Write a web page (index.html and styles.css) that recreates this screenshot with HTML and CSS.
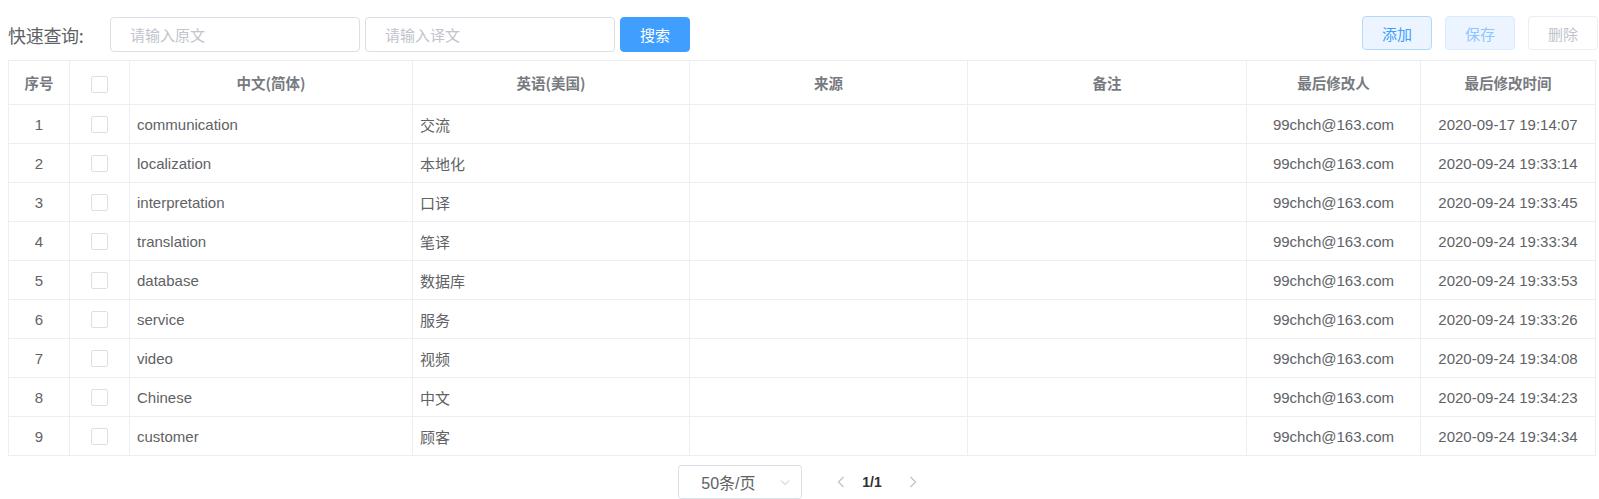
FILE: index.html
```html
<!DOCTYPE html>
<html lang="zh-CN">
<head>
<meta charset="utf-8">
<title>术语库</title>
<link rel="stylesheet" href="styles.css">
</head>
<body>
<div class="page">
  <div class="toolbar">
    <div class="search">
      <span class="label">快速查询:</span>
      <input class="input" type="text" placeholder="请输入原文">
      <input class="input second" type="text" placeholder="请输入译文">
      <button class="btn btn-primary">搜索</button>
    </div>
    <div class="actions">
      <button class="btn btn-plain">添加</button>
      <button class="btn btn-plain-disabled">保存</button>
      <button class="btn btn-disabled">删除</button>
    </div>
  </div>

  <table class="grid">
    <colgroup>
      <col class="c-no"><col class="c-chk"><col class="c-zh"><col class="c-en"><col class="c-src"><col class="c-note"><col class="c-user"><col class="c-time">
    </colgroup>
    <thead>
      <tr>
        <th>序号</th>
        <th><span class="checkbox"></span></th>
        <th>中文(简体)</th>
        <th>英语(美国)</th>
        <th>来源</th>
        <th>备注</th>
        <th>最后修改人</th>
        <th>最后修改时间</th>
      </tr>
    </thead>
    <tbody>
      <tr><td class="center">1</td><td class="center"><span class="checkbox"></span></td><td>communication</td><td>交流</td><td></td><td></td><td class="center">99chch@163.com</td><td class="center">2020-09-17 19:14:07</td></tr>
      <tr><td class="center">2</td><td class="center"><span class="checkbox"></span></td><td>localization</td><td>本地化</td><td></td><td></td><td class="center">99chch@163.com</td><td class="center">2020-09-24 19:33:14</td></tr>
      <tr><td class="center">3</td><td class="center"><span class="checkbox"></span></td><td>interpretation</td><td>口译</td><td></td><td></td><td class="center">99chch@163.com</td><td class="center">2020-09-24 19:33:45</td></tr>
      <tr><td class="center">4</td><td class="center"><span class="checkbox"></span></td><td>translation</td><td>笔译</td><td></td><td></td><td class="center">99chch@163.com</td><td class="center">2020-09-24 19:33:34</td></tr>
      <tr><td class="center">5</td><td class="center"><span class="checkbox"></span></td><td>database</td><td>数据库</td><td></td><td></td><td class="center">99chch@163.com</td><td class="center">2020-09-24 19:33:53</td></tr>
      <tr><td class="center">6</td><td class="center"><span class="checkbox"></span></td><td>service</td><td>服务</td><td></td><td></td><td class="center">99chch@163.com</td><td class="center">2020-09-24 19:33:26</td></tr>
      <tr><td class="center">7</td><td class="center"><span class="checkbox"></span></td><td>video</td><td>视频</td><td></td><td></td><td class="center">99chch@163.com</td><td class="center">2020-09-24 19:34:08</td></tr>
      <tr><td class="center">8</td><td class="center"><span class="checkbox"></span></td><td>Chinese</td><td>中文</td><td></td><td></td><td class="center">99chch@163.com</td><td class="center">2020-09-24 19:34:23</td></tr>
      <tr><td class="center">9</td><td class="center"><span class="checkbox"></span></td><td>customer</td><td>顾客</td><td></td><td></td><td class="center">99chch@163.com</td><td class="center">2020-09-24 19:34:34</td></tr>
    </tbody>
  </table>

  <div class="pager">
    <div class="select">
      <span>50条/页</span>
      <svg class="arrow" width="12" height="12" viewBox="0 0 12 12"><path d="M2 4.5 L6 8.5 L10 4.5" fill="none" stroke="#c0c4cc" stroke-width="1"/></svg>
    </div>
    <span class="nav">
      <svg width="10" height="14" viewBox="0 0 10 14"><path d="M7.5 2 L2.5 7 L7.5 12" fill="none" stroke="#c0c4cc" stroke-width="1.3"/></svg>
    </span>
    <span class="count">1/1</span>
    <span class="nav">
      <svg width="10" height="14" viewBox="0 0 10 14"><path d="M2.5 2 L7.5 7 L2.5 12" fill="none" stroke="#c0c4cc" stroke-width="1.3"/></svg>
    </span>
  </div>
</div>
</body>
</html>
```

FILE: styles.css
```css
* { box-sizing: border-box; }

html, body {
  margin: 0;
  padding: 0;
  background: #ffffff;
}

body {
  font-family: "Liberation Sans", Arial, "Noto Sans CJK SC", sans-serif;
  font-size: 15px;
  color: #606266;
}

.page {
  padding: 16px 1px 0 8px;
}

.toolbar {
  display: flex;
  justify-content: space-between;
  align-items: flex-start;
  height: 44px;
}

.search {
  display: flex;
  align-items: center;
  margin-top: 1px;
}

.label {
  font-family: "Noto Sans CJK SC", sans-serif;
  font-size: 18px;
  color: #606266;
  width: 102px;
  letter-spacing: -0.3px;
}

.input {
  width: 250px;
  height: 35px;
  border: 1px solid #dcdfe6;
  border-radius: 4px;
  padding: 0 19px;
  font-family: "Noto Sans CJK SC", sans-serif;
  font-size: 15px;
  color: #606266;
  outline: none;
  background: #fff;
}

.input::placeholder { color: #c0c4cc; }

.input.second { margin-left: 5px; }

.btn {
  width: 70px;
  height: 35px;
  border-radius: 4px;
  font-family: "Noto Sans CJK SC", sans-serif;
  font-size: 15px;
  padding: 0;
  cursor: pointer;
}

.btn-primary {
  margin-left: 5px;
  background: #409eff;
  border: 1px solid #409eff;
  color: #ffffff;
}

.actions {
  display: flex;
  gap: 13px;
}

.actions .btn { height: 34px; }

.btn-plain {
  background: #ecf5ff;
  border: 1px solid #b3d8ff;
  color: #409eff;
}

.btn-plain-disabled {
  background: #ecf5ff;
  border: 1px solid #d9ecff;
  color: #8cc5ff;
}

.btn-disabled {
  background: #ffffff;
  border: 1px solid #ebeef5;
  color: #c0c4cc;
}

.grid {
  width: 1587px;
  border-collapse: collapse;
  table-layout: fixed;
  border: 1px solid #ebeef5;
}

.c-no { width: 61px; }
.c-chk { width: 60px; }
.c-zh { width: 283px; }
.c-en { width: 277px; }
.c-src { width: 278px; }
.c-note { width: 279px; }
.c-user { width: 174px; }
.c-time { width: 175px; }

.grid th,
.grid td {
  border: 1px solid #ebeef5;
  padding: 0 7px;
  white-space: nowrap;
  overflow: hidden;
}

.grid th {
  height: 44px;
  font-family: "Noto Sans CJK SC", sans-serif;
  font-weight: 700;
  font-size: 14.5px;
  color: #777a80;
  text-align: center;
}

.grid td {
  height: 39px;
  font-family: "Liberation Sans", "Noto Sans CJK SC", sans-serif;
  font-size: 15px;
  color: #606266;
  text-align: left;
}

.grid td.center { text-align: center; }

.checkbox {
  display: inline-block;
  width: 17px;
  height: 17px;
  border: 1px solid #dcdfe6;
  border-radius: 2px;
  background: #fff;
  vertical-align: middle;
}

.pager {
  display: flex;
  align-items: center;
  justify-content: center;
  margin-top: 9px;
  padding-right: 8px;
}

.select {
  width: 124px;
  height: 34px;
  border: 1px solid #dcdfe6;
  border-radius: 3px;
  display: flex;
  align-items: center;
  justify-content: space-between;
  padding: 0 10px 0 22px;
  font-family: "Liberation Sans", "Noto Sans CJK SC", sans-serif;
  font-size: 16px;
  color: #606266;
}

.nav {
  display: flex;
  align-items: center;
  width: 14px;
  justify-content: center;
}

.select + .nav { margin-left: 32px; }

.count {
  margin: 0 24px 0 14px;
  font-size: 14px;
  font-weight: 700;
  color: #303133;
}
```
